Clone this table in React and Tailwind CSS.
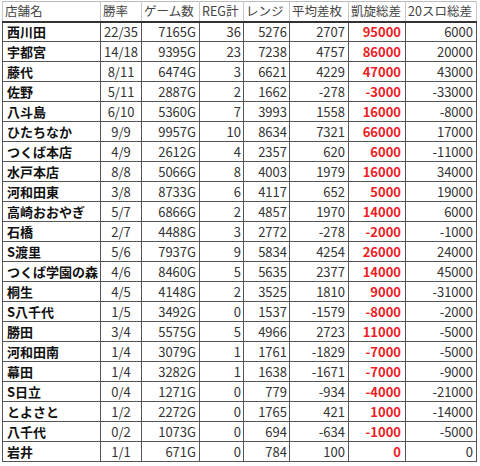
const ROWS = [
  ["西川田", "22/35", "7165G", 36, 5276, 2707, 95000, 6000],
  ["宇都宮", "14/18", "9395G", 23, 7238, 4757, 86000, 20000],
  ["藤代", "8/11", "6474G", 3, 6621, 4229, 47000, 43000],
  ["佐野", "5/11", "2887G", 2, 1662, -278, -3000, -33000],
  ["八斗島", "6/10", "5360G", 7, 3993, 1558, 16000, -8000],
  ["ひたちなか", "9/9", "9957G", 10, 8634, 7321, 66000, 17000],
  ["つくば本店", "4/9", "2612G", 4, 2357, 620, 6000, -11000],
  ["水戸本店", "8/8", "5066G", 8, 4003, 1979, 16000, 34000],
  ["河和田東", "3/8", "8733G", 6, 4117, 652, 5000, 19000],
  ["高崎おおやぎ", "5/7", "6866G", 2, 4857, 1970, 14000, 6000],
  ["石橋", "2/7", "4488G", 3, 2772, -278, -2000, -1000],
  ["S渡里", "5/6", "7937G", 9, 5834, 4254, 26000, 24000],
  ["つくば学園の森", "4/6", "8460G", 5, 5635, 2377, 14000, 45000],
  ["桐生", "4/5", "4148G", 2, 3525, 1810, 9000, -31000],
  ["S八千代", "1/5", "3492G", 0, 1537, -1579, -8000, -2000],
  ["勝田", "3/4", "5575G", 5, 4966, 2723, 11000, -5000],
  ["河和田南", "1/4", "3079G", 1, 1761, -1829, -7000, -5000],
  ["幕田", "1/4", "3282G", 1, 1638, -1671, -7000, -9000],
  ["S日立", "0/4", "1271G", 0, 779, -934, -4000, -21000],
  ["とよさと", "1/2", "2272G", 0, 1765, 421, 1000, -14000],
  ["八千代", "0/2", "1073G", 0, 694, -634, -1000, -5000],
  ["岩井", "1/1", "671G", 0, 784, 100, 0, 0],
];

const HEAD = ["店舗名", "勝率", "ゲーム数", "REG計", "レンジ", "平均差枚", "凱旋総差", "20スロ総差"];
const WIDTHS = ["w-[98px]", "w-[41px]", "w-[58px]", "w-[44px]", "w-[46px]", "w-[59px]", "w-[57px]", "w-[71px]"];

const cell = "h-[20px] overflow-hidden whitespace-nowrap border-x border-[#555] p-0 leading-none";

export default function App() {
  return (
    <div className="h-[466px] w-[480px] bg-white pl-[2px] pt-[1px] font-['Noto_Sans_CJK_JP',sans-serif] text-[13px] text-[#333]">
      <table className="w-[474px] table-fixed border-collapse">
        <colgroup>
          {WIDTHS.map((w, i) => (
            <col key={i} className={w} />
          ))}
        </colgroup>
        <thead>
          <tr className="border-t border-b-2 border-[#bbb] border-b-[#333]">
            {HEAD.map((h) => (
              <th
                key={h}
                className="h-[20px] overflow-hidden whitespace-nowrap border-x border-[#c8c8c8] p-0 pl-[2px] text-left text-[12.5px] font-normal leading-none text-[#444]"
              >
                {h}
              </th>
            ))}
          </tr>
        </thead>
        <tbody>
          {ROWS.map((r) => (
            <tr key={r[0]} className="border-b border-[#555]">
              <td className={`${cell} pl-[4px] font-bold text-[#111]`}>{r[0]}</td>
              <td className={`${cell} text-center`}>{r[1]}</td>
              <td className={`${cell} pr-[3px] text-right`}>{r[2]}</td>
              <td className={`${cell} pr-[2px] text-right`}>{r[3]}</td>
              <td className={`${cell} pr-[2px] text-right`}>{r[4]}</td>
              <td className={`${cell} pr-[3px] text-right`}>{r[5]}</td>
              <td className={`${cell} pr-[4px] text-right font-bold text-[#ee1c25]`}>{r[6]}</td>
              <td className={`${cell} pr-[3px] text-right`}>{r[7]}</td>
            </tr>
          ))}
        </tbody>
      </table>
    </div>
  );
}
